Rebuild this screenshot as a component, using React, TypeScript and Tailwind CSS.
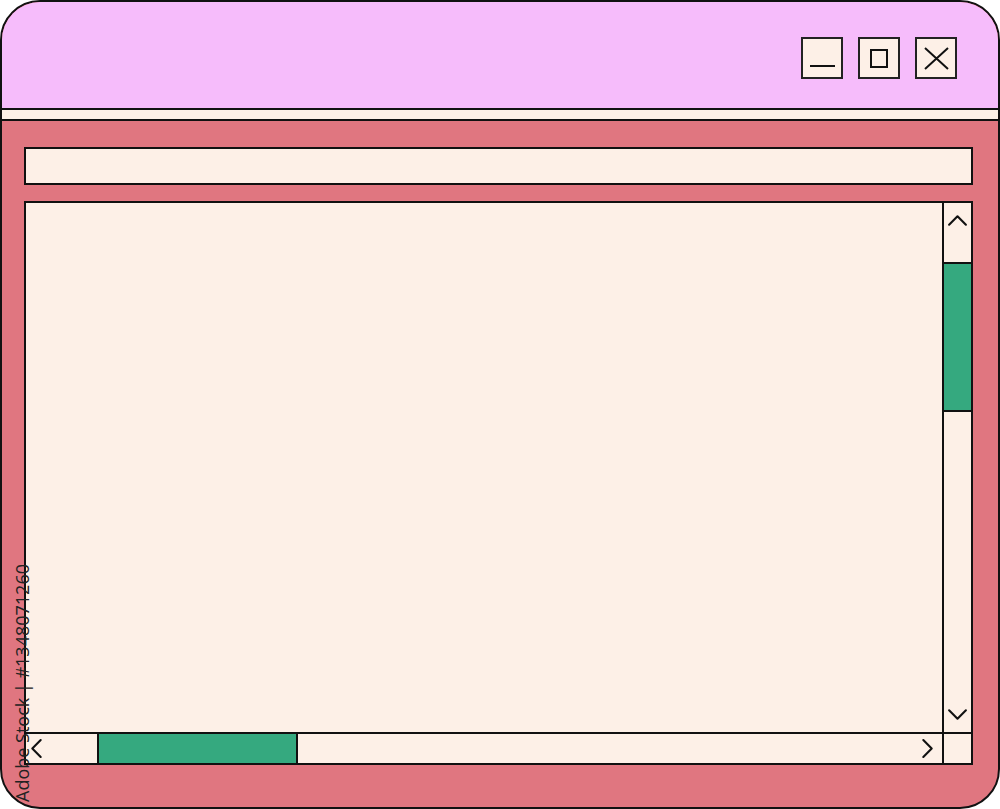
import React from "react";

const Chevron = ({ d, className }: { d: string; className: string }) => (
  <svg className={className} viewBox="0 0 20 20" fill="none" stroke="#111" strokeWidth="2" strokeLinecap="round" strokeLinejoin="round">
    <path d={d} />
  </svg>
);

export default function App() {
  return (
    <div className="relative w-[1000px] h-[809px] bg-white" style={{ fontFamily: '"Open Sans", "Liberation Sans", sans-serif' }}>
      <div className="w-[1000px] h-[809px] rounded-[40px] border-2 border-[#111] overflow-hidden flex flex-col bg-[#e07680]">
        {/* title bar */}
        <div className="h-[106px] bg-[#f6bcfb] flex items-start justify-end pt-[35px] pr-[41px] gap-[15px]">
          <div className="w-[42px] h-[42px] border-2 border-[#222] bg-[#fdf0e7] flex items-end justify-center pb-[10px]">
            <div className="w-[25px] h-[2px] bg-[#111]" />
          </div>
          <div className="w-[42px] h-[42px] border-2 border-[#222] bg-[#fdf0e7] flex items-center justify-center">
            <div className="w-[18px] h-[19px] border-2 border-[#111]" />
          </div>
          <div className="w-[42px] h-[42px] border-2 border-[#222] bg-[#fdf0e7] flex items-center justify-center">
            <svg width="25" height="23" viewBox="0 0 25 23" stroke="#111" strokeWidth="2">
              <path d="M1 1 L24 22 M24 1 L1 22" />
            </svg>
          </div>
        </div>
        <div className="h-[2px] bg-[#111]" />
        <div className="h-[9px] bg-[#fdf0e7]" />
        <div className="h-[2px] bg-[#111]" />
        {/* body */}
        <div className="flex-1 flex flex-col pl-[22px] pr-[25px] pt-[26px] pb-[42px] gap-[16px]">
          <div className="h-[38px] border-2 border-[#111] bg-[#fdf0e7]" />
          <div className="flex-1 border-2 border-[#111] bg-[#fdf0e7] grid grid-cols-[1fr_29px] grid-rows-[1fr_31px]">
            <div />
            <div className="border-l-2 border-[#111] flex flex-col">
              <div className="h-[61px] border-b-2 border-[#111] flex justify-center pt-[7px]">
                <Chevron className="w-[21px] h-[21px]" d="M2 14 L10 6 L18 14" />
              </div>
              <div className="h-[148px] bg-[#35a97f] border-b-2 border-[#111]" />
              <div className="flex-1 flex justify-center items-end pb-[7px]">
                <Chevron className="w-[21px] h-[21px]" d="M2 6 L10 14 L18 6" />
              </div>
            </div>
            <div className="border-t-2 border-[#111] flex">
              <div className="w-[71px] flex items-center">
                <Chevron className="w-[21px] h-[21px]" d="M14 2 L6 10 L14 18" />
              </div>
              <div className="w-[201px] bg-[#35a97f] border-x-2 border-[#111]" />
              <div className="flex-1 flex items-center justify-end pr-[4px]">
                <Chevron className="w-[21px] h-[21px]" d="M6 2 L14 10 L6 18" />
              </div>
            </div>
            <div className="border-t-2 border-l-2 border-[#111]" />
          </div>
        </div>
      </div>
      {/* watermark */}
      <div className="absolute left-[12px] top-[802px] origin-top-left -rotate-90 whitespace-nowrap text-[18px] leading-[20px] text-[#222]" style={{ fontFamily: '"Open Sans", "Liberation Sans", sans-serif' }}>
        Adobe Stock | #1348071260
      </div>
    </div>
  );
}
